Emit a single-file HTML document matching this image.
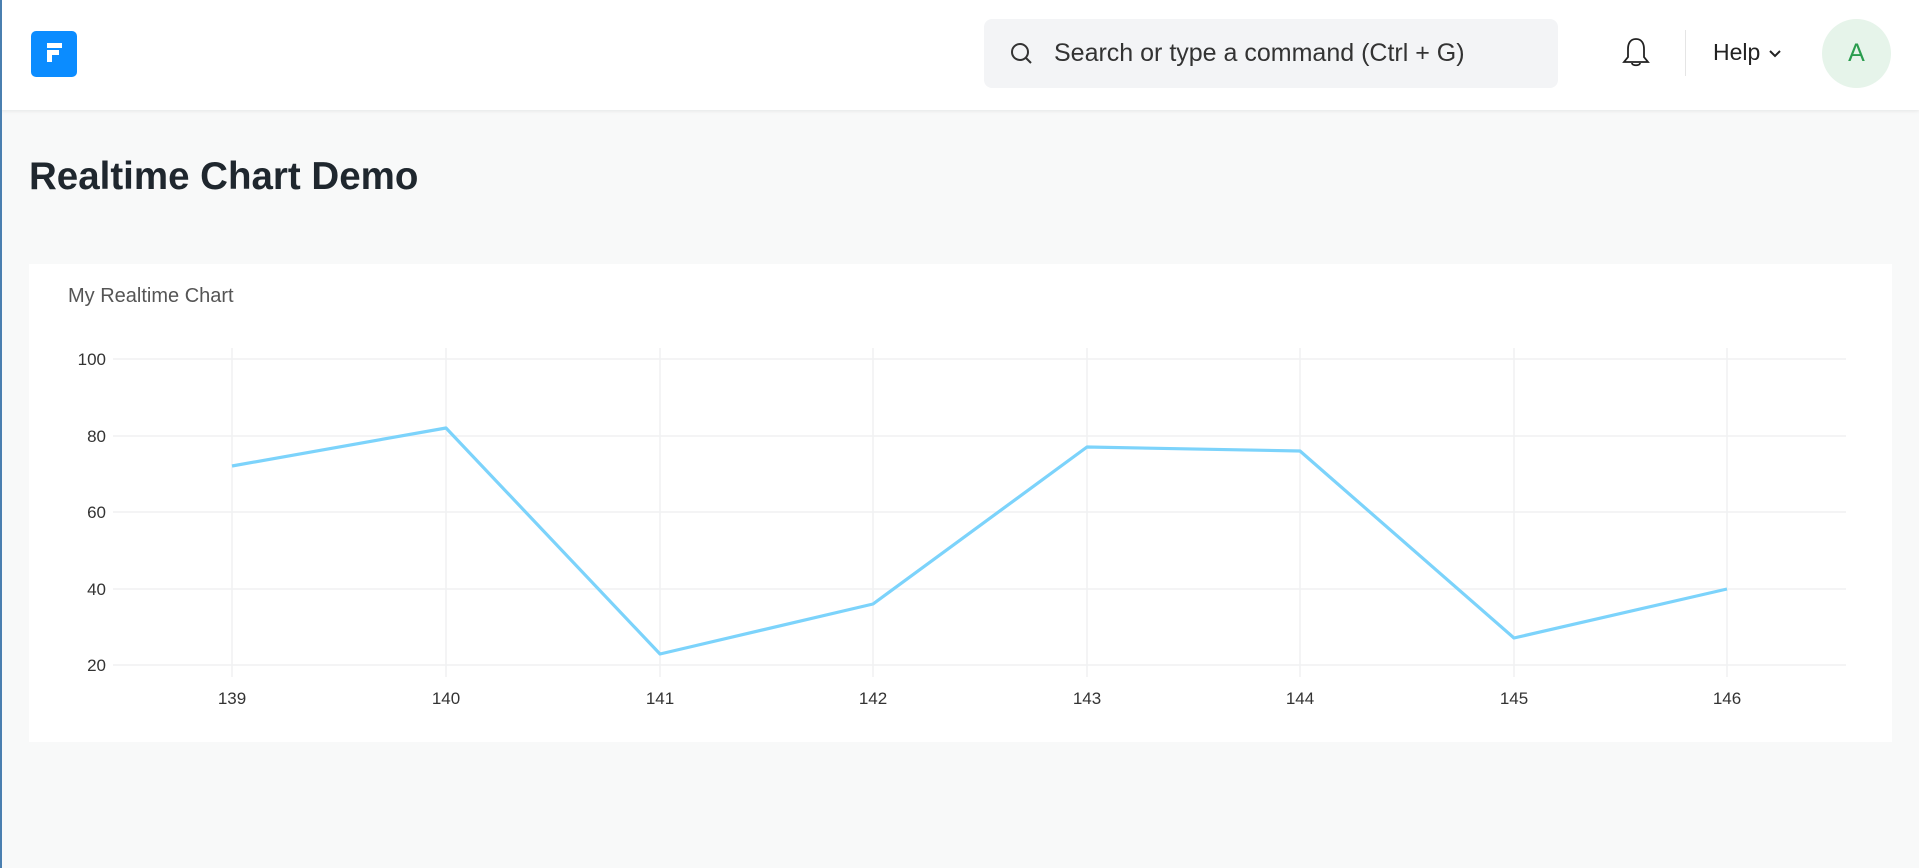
<!DOCTYPE html>
<html><head><meta charset="utf-8"><style>
*{margin:0;padding:0;box-sizing:border-box}
body{width:1919px;height:868px;background:#f8f9f9;font-family:"Liberation Sans",sans-serif;position:relative;overflow:hidden}
.edge{position:absolute;left:0;top:0;width:2px;height:868px;background:#4a7fb0;z-index:5}
.hdr{position:absolute;left:0;top:0;width:1919px;height:110px;background:#fff;box-shadow:0 1px 4px rgba(0,0,0,.08)}
.logo{position:absolute;left:31px;top:31px;width:46px;height:46px;background:#0b8cff;border-radius:5px}
.search{position:absolute;left:984px;top:19px;width:574px;height:69px;background:#f3f4f6;border-radius:8px;font-size:25px;color:#333;line-height:69px;padding-left:70px}
.div{position:absolute;left:1685px;top:30px;width:1px;height:46px;background:#e5e5e5}
.help{position:absolute;left:1713px;top:39px;font-size:23px;color:#222}
.av{position:absolute;left:1822px;top:19px;width:69px;height:69px;border-radius:50%;background:#e6f4ea;color:#2a9d4e;font-size:25px;text-align:center;line-height:69px}
h1{position:absolute;left:29px;top:155px;font-size:38.5px;font-weight:bold;color:#1f272e}
.card{position:absolute;left:29px;top:264px;width:1863px;height:478px;background:#fff}
.ct{position:absolute;left:68px;top:285px;font-size:20px;color:#555}
</style></head><body>
<div class="edge"></div>
<div class="hdr">
<div class="logo"><svg width="46" height="46"><path d="M16 12h15v5H16zM16 19h12v5H21v7h-5z" fill="#fff"/></svg></div>
<div class="search"><svg style="position:absolute;left:26px;top:23px" width="24" height="24" fill="none" stroke="#333" stroke-width="2"><circle cx="10" cy="10" r="8"/><path d="M16 16l5 5"/></svg>Search or type a command (Ctrl + G)</div>
<svg style="position:absolute;left:1621px;top:36px" width="30" height="36" fill="none" stroke="#222" stroke-width="1.8"><path d="M15 3c-6 0-8 5-8 10v8l-4 5h24l-4-5v-8c0-5-2-10-8-10zM11 27c0 3 8 3 8 0"/></svg>
<div class="div"></div>
<div class="help">Help <svg width="16" height="12" fill="none" stroke="#222" stroke-width="2"><path d="M3 3l5 5 5-5"/></svg></div>
<div class="av">A</div>
</div>
<h1>Realtime Chart Demo</h1>
<div class="card"></div>
<div class="ct">My Realtime Chart</div>
<svg style="position:absolute;left:0;top:0" width="1919" height="868" font-family="Liberation Sans" font-size="17" fill="#333">
<g stroke="#f0f1f2" stroke-width="1.5">
<path d="M113 359H1846M113 436H1846M113 512H1846M113 589H1846M113 665H1846"/>
<path d="M232 348V677M446 348V677M660 348V677M873 348V677M1087 348V677M1300 348V677M1514 348V677M1727 348V677"/>
</g>
<g text-anchor="end"><text x="106" y="365">100</text><text x="106" y="442">80</text><text x="106" y="518">60</text><text x="106" y="595">40</text><text x="106" y="671">20</text></g>
<g text-anchor="middle"><text x="232" y="704">139</text><text x="446" y="704">140</text><text x="660" y="704">141</text><text x="873" y="704">142</text><text x="1087" y="704">143</text><text x="1300" y="704">144</text><text x="1514" y="704">145</text><text x="1727" y="704">146</text></g>
<polyline fill="none" stroke="#7cd3fb" stroke-width="3.2" stroke-linejoin="round" points="232,466 446,428 660,654 873,604 1087,447 1300,451 1514,638 1727,589"/>
</svg>
</body></html>
